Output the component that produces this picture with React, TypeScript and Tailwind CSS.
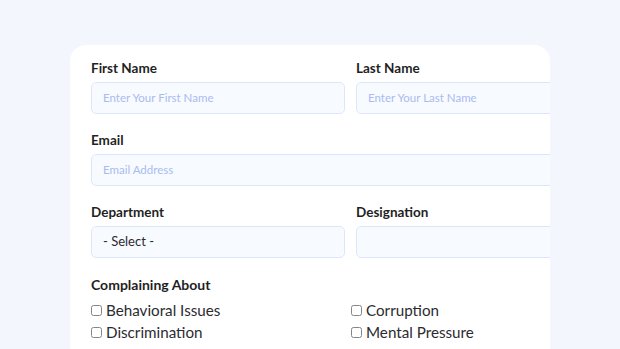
import React from "react";

const font = { fontFamily: "Lato, 'Noto Sans', sans-serif" };

function Label({ children }: { children: React.ReactNode }) {
  return (
    <div className="h-[20px] leading-[20px] text-[13.5px] font-bold text-[#1f1f24] mb-[4px]">
      {children}
    </div>
  );
}

function Input({ placeholder, wide }: { placeholder?: string; wide?: boolean }) {
  return (
    <div
      className={`h-[32px] ${wide ? "w-[530px]" : "w-[254px]"} shrink-0 rounded-[5px] border border-[#dde7fb] bg-[#f7faff] flex items-center px-[11px] text-[11.5px] text-[#a9bcef]`}
    >
      {placeholder}
    </div>
  );
}

function Check({ label }: { label: string }) {
  return (
    <div className="h-[22px] flex items-center gap-[4px]">
      <span className="w-[11px] h-[11px] rounded-[2.5px] border border-[#858585] bg-white shrink-0" />
      <span className="text-[15.2px] text-[#2b2b30]">{label}</span>
    </div>
  );
}

export default function App() {
  return (
    <div className="w-[620px] h-[349px] bg-[#f3f6fd] overflow-hidden pt-[45px] pl-[70px]" style={font}>
      <div className="w-[480px] h-[320px] bg-white rounded-t-[16px] overflow-hidden pt-[13px] pl-[21px]">
        <div className="flex gap-[11px]">
          <div>
            <Label>First Name</Label>
            <Input placeholder="Enter Your First Name" />
          </div>
          <div>
            <Label>Last Name</Label>
            <Input placeholder="Enter Your Last Name" />
          </div>
        </div>
        <div className="mt-[16px]">
          <Label>Email</Label>
          <Input placeholder="Email Address" wide />
        </div>
        <div className="flex gap-[11px] mt-[16px]">
          <div>
            <Label>Department</Label>
            <div className="h-[32px] w-[254px] rounded-[5px] border border-[#dde7fb] bg-[#f7faff] flex items-center px-[11px] text-[13px] text-[#2b2b30]">
              - Select -
            </div>
          </div>
          <div>
            <Label>Designation</Label>
            <Input />
          </div>
        </div>
        <div className="mt-[17px] h-[20px] leading-[20px] text-[14px] font-bold text-[#1f1f24]">
          Complaining About
        </div>
        <div className="mt-[4px] grid grid-cols-[260px_200px]">
          <Check label="Behavioral Issues" />
          <Check label="Corruption" />
          <Check label="Discrimination" />
          <Check label="Mental Pressure" />
        </div>
      </div>
    </div>
  );
}
